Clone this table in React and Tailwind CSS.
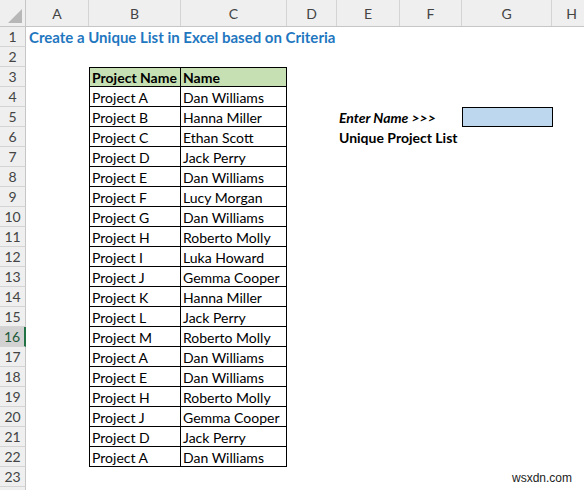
import React from "react";

const cols = [
	{ key: "A", w: 63 },
	{ key: "B", w: 92 },
	{ key: "C", w: 106 },
	{ key: "D", w: 50 },
	{ key: "E", w: 63 },
	{ key: "F", w: 62 },
	{ key: "G", w: 90 },
	{ key: "H", w: 40 },
];

const projects = [
	["Project A", "Dan Williams"],
	["Project B", "Hanna Miller"],
	["Project C", "Ethan Scott"],
	["Project D", "Jack Perry"],
	["Project E", "Dan Williams"],
	["Project F", "Lucy Morgan"],
	["Project G", "Dan Williams"],
	["Project H", "Roberto Molly"],
	["Project I", "Luka Howard"],
	["Project J", "Gemma Cooper"],
	["Project K", "Hanna Miller"],
	["Project L", "Jack Perry"],
	["Project M", "Roberto Molly"],
	["Project A", "Dan Williams"],
	["Project E", "Dan Williams"],
	["Project H", "Roberto Molly"],
	["Project J", "Gemma Cooper"],
	["Project D", "Jack Perry"],
	["Project A", "Dan Williams"],
];

const font = { fontFamily: "Lato, 'Open Sans', sans-serif" };

const RowHead = ({ n, selected }) => (
	<div
		className={
			"w-[26px] shrink-0 h-full flex items-center justify-center text-[14px] border-b border-[#d4d4d4] " +
			(selected
				? "bg-[#d2d2d2] text-[#1e5a3a] border-r-2 border-r-[#217346]"
				: "bg-[#efefef] text-[#444] border-r border-r-[#c6c6c6]")
		}
	>
		{n}
	</div>
);

const Row = ({ n, children }) => (
	<div className="flex h-[20px] text-[14px] text-black">
		<RowHead n={n} selected={n === 16} />
		{children}
	</div>
);

const Cell = ({ w, className = "", children }) => (
	<div
		className={"shrink-0 h-full flex items-center pt-[1px] overflow-visible whitespace-nowrap " + className}
		style={{ width: w }}
	>
		{children}
	</div>
);

export default function App() {
	const rows = [
		<Row key={3} n={3}>
			<Cell w={63} />
			<Cell w={92} className="bg-[#c6e0b4] border border-black font-bold pl-[2px]">
				Project Name
			</Cell>
			<Cell w={106} className="bg-[#c6e0b4] border-t border-r border-b border-black font-bold pl-[2px]">
				Name
			</Cell>
		</Row>,
	];

	projects.forEach((p, i) => {
		const n = i + 4;
		rows.push(
			<Row key={n} n={n}>
				<Cell w={63} />
				<Cell w={92} className="border-l border-r border-b border-black pl-[2px]">
					{p[0]}
				</Cell>
				<Cell w={106} className="border-r border-b border-black pl-[2px]">
					{p[1]}
				</Cell>
				<Cell w={50} />
				{n === 5 && (
					<>
						<Cell w={125} className="pl-[2px] font-bold italic">
							Enter Name &gt;&gt;&gt;
						</Cell>
						<Cell w={91} className="bg-[#bdd7ee] border border-black" />
					</>
				)}
				{n === 6 && (
					<Cell w={125} className="pl-[2px] font-bold">
						Unique Project List
					</Cell>
				)}
			</Row>
		);
	});

	return (
		<div className="w-[584px] h-[490px] overflow-hidden bg-white relative" style={font}>
			{/* column headers */}
			<div className="flex h-[27px] bg-[#efefef] border-b border-[#c6c6c6]">
				<div className="w-[26px] shrink-0 h-full border-r border-[#c6c6c6] relative">
					<div className="absolute right-[3px] bottom-[3px] w-0 h-0 border-l-[14px] border-l-transparent border-b-[14px] border-b-[#b7b7b7]" />
				</div>
				{cols.map((c) => (
					<div
						key={c.key}
						className="shrink-0 h-full flex items-center justify-center text-[14px] text-[#444] border-r border-[#d4d4d4]"
						style={{ width: c.w }}
					>
						{c.key}
					</div>
				))}
			</div>

			<Row n={1}>
				<Cell w={420} className="pl-[3px] font-bold text-[#1f77c0] text-[15px]">
					Create a Unique List in Excel based on Criteria
				</Cell>
			</Row>
			<Row n={2} />
			{rows}
			<Row n={23} />
			<Row n="" />

			<div
				className="absolute right-[12px] bottom-[3px] text-[12px] text-[#222]"
				style={{ fontFamily: "'Liberation Sans', Arial, sans-serif" }}
			>
				wsxdn.com
			</div>
		</div>
	);
}
